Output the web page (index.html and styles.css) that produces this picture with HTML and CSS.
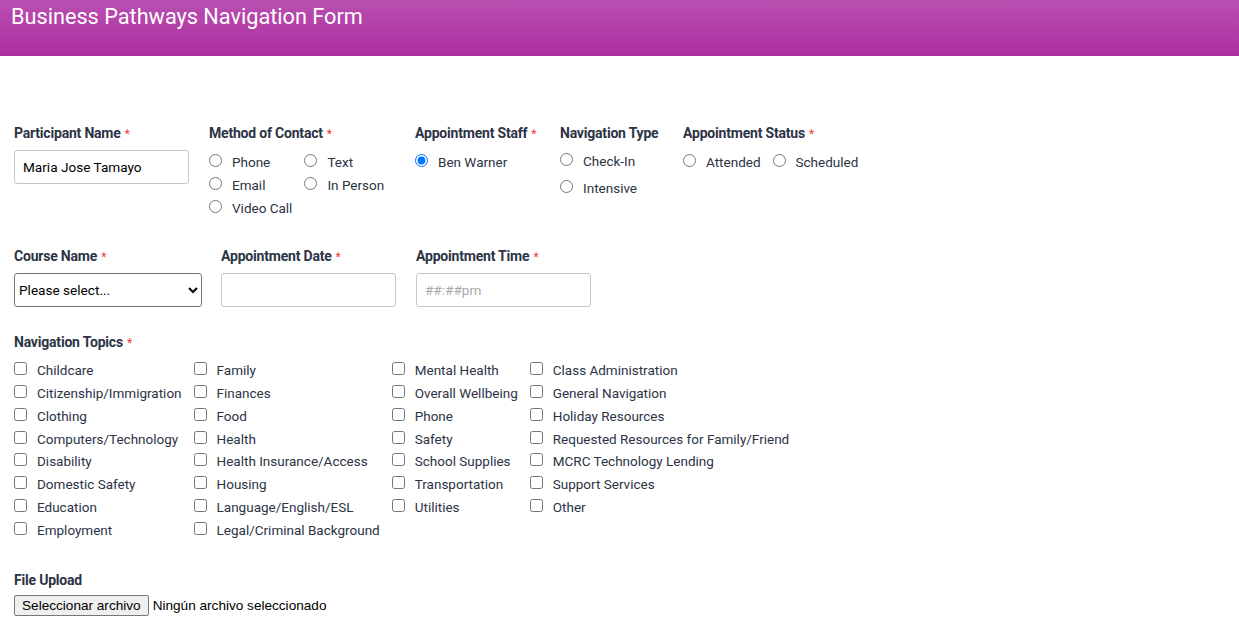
FILE: index.html
```html
<!DOCTYPE html>
<html lang="en">
<head>
<meta charset="utf-8">
<title>Business Pathways Navigation Form</title>
<link rel="stylesheet" href="styles.css">
</head>
<body>
<header class="topbar">
  <h1 class="title">Business Pathways Navigation Form</h1>
</header>
<form class="form">
  <div class="row row-one">
    <div class="field">
      <div class="label">Participant Name<span class="req">*</span></div>
      <input class="text-input" type="text" value="Maria Jose Tamayo">
    </div>
    <div class="field">
      <div class="label">Method of Contact<span class="req">*</span></div>
      <div class="opt-grid">
        <label class="opt"><input type="radio" name="moc"><span>Phone</span></label>
        <label class="opt"><input type="radio" name="moc"><span>Text</span></label>
        <label class="opt"><input type="radio" name="moc"><span>Email</span></label>
        <label class="opt"><input type="radio" name="moc"><span>In Person</span></label>
        <label class="opt"><input type="radio" name="moc"><span>Video Call</span></label>
      </div>
    </div>
    <div class="field">
      <div class="label">Appointment Staff<span class="req">*</span></div>
      <div class="opt-col">
        <label class="opt"><input type="radio" name="staff" checked><span>Ben Warner</span></label>
      </div>
    </div>
    <div class="field">
      <div class="label">Navigation Type</div>
      <div class="opt-col opt-col-spaced">
        <label class="opt"><input type="radio" name="ntype"><span>Check-In</span></label>
        <label class="opt"><input type="radio" name="ntype"><span>Intensive</span></label>
      </div>
    </div>
    <div class="field">
      <div class="label">Appointment Status<span class="req">*</span></div>
      <div class="opt-inline">
        <label class="opt"><input type="radio" name="status"><span>Attended</span></label>
        <label class="opt"><input type="radio" name="status"><span>Scheduled</span></label>
      </div>
    </div>
  </div>

  <div class="row row-two">
    <div class="field">
      <div class="label">Course Name<span class="req">*</span></div>
      <select class="select">
        <option>Please select...</option>
      </select>
    </div>
    <div class="field">
      <div class="label">Appointment Date<span class="req">*</span></div>
      <input class="text-input" type="text">
    </div>
    <div class="field">
      <div class="label">Appointment Time<span class="req">*</span></div>
      <input class="text-input" type="text" placeholder="##:##pm">
    </div>
  </div>

  <div class="row row-topics">
    <div class="label">Navigation Topics<span class="req">*</span></div>
    <div class="topics">
      <div class="topic-col">
        <label class="opt"><input type="checkbox"><span>Childcare</span></label>
        <label class="opt"><input type="checkbox"><span>Citizenship/Immigration</span></label>
        <label class="opt"><input type="checkbox"><span>Clothing</span></label>
        <label class="opt"><input type="checkbox"><span>Computers/Technology</span></label>
        <label class="opt"><input type="checkbox"><span>Disability</span></label>
        <label class="opt"><input type="checkbox"><span>Domestic Safety</span></label>
        <label class="opt"><input type="checkbox"><span>Education</span></label>
        <label class="opt"><input type="checkbox"><span>Employment</span></label>
      </div>
      <div class="topic-col">
        <label class="opt"><input type="checkbox"><span>Family</span></label>
        <label class="opt"><input type="checkbox"><span>Finances</span></label>
        <label class="opt"><input type="checkbox"><span>Food</span></label>
        <label class="opt"><input type="checkbox"><span>Health</span></label>
        <label class="opt"><input type="checkbox"><span>Health Insurance/Access</span></label>
        <label class="opt"><input type="checkbox"><span>Housing</span></label>
        <label class="opt"><input type="checkbox"><span>Language/English/ESL</span></label>
        <label class="opt"><input type="checkbox"><span>Legal/Criminal Background</span></label>
      </div>
      <div class="topic-col">
        <label class="opt"><input type="checkbox"><span>Mental Health</span></label>
        <label class="opt"><input type="checkbox"><span>Overall Wellbeing</span></label>
        <label class="opt"><input type="checkbox"><span>Phone</span></label>
        <label class="opt"><input type="checkbox"><span>Safety</span></label>
        <label class="opt"><input type="checkbox"><span>School Supplies</span></label>
        <label class="opt"><input type="checkbox"><span>Transportation</span></label>
        <label class="opt"><input type="checkbox"><span>Utilities</span></label>
      </div>
      <div class="topic-col">
        <label class="opt"><input type="checkbox"><span>Class Administration</span></label>
        <label class="opt"><input type="checkbox"><span>General Navigation</span></label>
        <label class="opt"><input type="checkbox"><span>Holiday Resources</span></label>
        <label class="opt"><input type="checkbox"><span>Requested Resources for Family/Friend</span></label>
        <label class="opt"><input type="checkbox"><span>MCRC Technology Lending</span></label>
        <label class="opt"><input type="checkbox"><span>Support Services</span></label>
        <label class="opt"><input type="checkbox"><span>Other</span></label>
      </div>
    </div>
  </div>

  <div class="row row-file">
    <div class="label label-file">File Upload</div>
    <div class="file">
      <button type="button" class="file-btn">Seleccionar archivo</button>
      <span class="file-name">Ningún archivo seleccionado</span>
    </div>
  </div>
</form>
</body>
</html>
```

FILE: styles.css
```css
* { box-sizing: border-box; }

html, body {
  margin: 0;
  padding: 0;
  background: #ffffff;
}

body {
  font-family: Roboto, "Liberation Sans", Arial, sans-serif;
  color: #2c3345;
}

.topbar {
  height: 56px;
  background: linear-gradient(180deg, #b94fb1 0%, #ad2fa0 100%);
  padding: 4px 0 0 11px;
}

.title {
  margin: 0;
  font-family: Roboto, "Liberation Sans", Arial, sans-serif;
  font-size: 21.7px;
  line-height: 26px;
  font-weight: 400;
  color: #ffffff;
}

.form {
  padding: 67px 14px 0 14px;
}

.label {
  font-size: 14px;
  line-height: 20px;
  font-weight: 700;
  color: #2c3345;
  margin-bottom: 7px;
  letter-spacing: -0.2px;
}

.req {
  color: #f23a3c;
  font-size: 12px;
  font-weight: 400;
  margin-left: 4px;
}

.row-one {
  display: grid;
  grid-template-columns: 195px 206px 145px 123px auto;
}

.row-one .text-input {
  margin-top: -1px;
}

.row-two {
  display: flex;
  gap: 19px;
  margin-top: 26px;
}

.row-two .field:nth-child(2) { margin-right: 1px; }

.row-two .label {
  margin-bottom: 6px;
}

.row-topics {
  margin-top: 25px;
}

.row-topics .label {
  margin-bottom: 6px;
}

.row-file {
  margin-top: 28px;
}

.label-file {
  margin-bottom: 5px;
}

.text-input {
  display: block;
  width: 175px;
  height: 34px;
  border: 1px solid #c3c7d0;
  border-radius: 3px;
  padding: 0 8px;
  font-family: Roboto, "Liberation Sans", Arial, sans-serif;
  font-size: 13.6px;
  color: #000000;
  background: #ffffff;
  outline: none;
}

.text-input::placeholder {
  color: #a9a9a9;
}

.select {
  display: block;
  width: 188px;
  height: 34px;
  border: 1px solid #767676;
  border-radius: 3px;
  padding: 0;
  font-family: Roboto, "Liberation Sans", Arial, sans-serif;
  font-size: 13.6px;
  color: #000000;
  background: #ffffff;
}

.opt {
  display: flex;
  align-items: center;
  height: 23px;
  font-size: 13.5px;
  line-height: 23px;
  color: #2c3345;
  white-space: nowrap;
}

.opt input {
  margin: 0 10px 4px 0;
  width: 13px;
  height: 13px;
  flex: none;
}

.opt-grid {
  display: grid;
  grid-template-columns: auto auto;
  column-gap: 12px;
  justify-content: start;
}

.opt-col {
  display: flex;
  flex-direction: column;
}

.opt-col-spaced {
  gap: 4px;
}

.opt-inline {
  display: flex;
  gap: 12px;
}

.topics {
  display: flex;
  gap: 12px;
  align-items: flex-start;
}

.topic-col {
  display: flex;
  flex-direction: column;
}

.topic-col .opt {
  height: 22.86px;
}

.file {
  display: flex;
  align-items: center;
}

.file-btn {
  font-family: "Liberation Sans", Arial, sans-serif;
  font-size: 13.6px;
  color: #000000;
  background: #efefef;
  border: 1px solid #767676;
  border-radius: 2px;
  padding: 1px 7px;
  height: 21px;
  line-height: 17px;
}

.file-name {
  font-family: "Liberation Sans", Arial, sans-serif;
  font-size: 13.6px;
  color: #000000;
  margin-left: 4px;
}
```
